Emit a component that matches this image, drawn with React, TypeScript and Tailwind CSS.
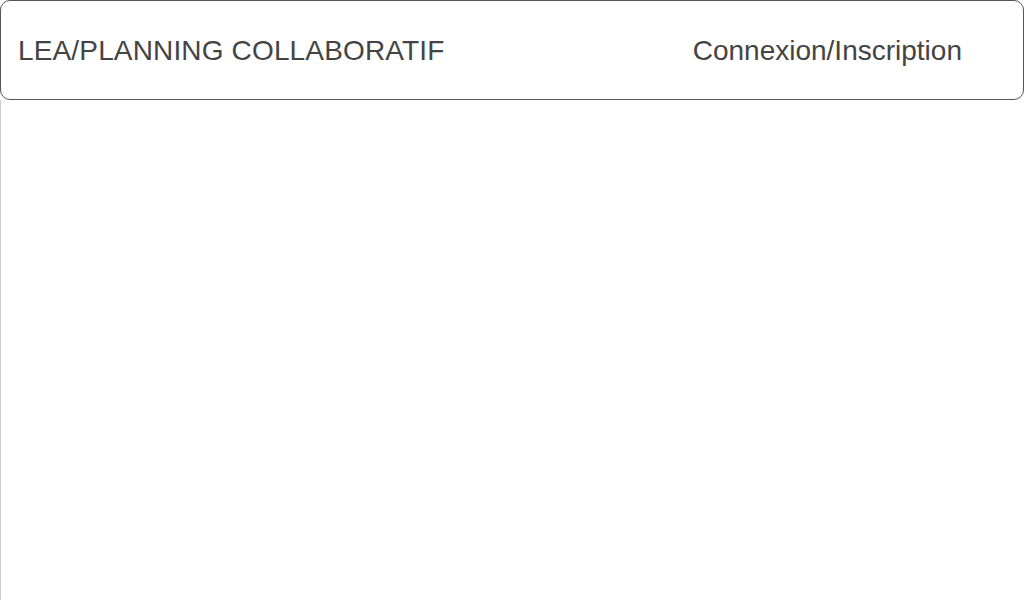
export default function App() {
  return (
    <div className="w-[1024px] h-[600px] bg-white flex flex-col font-['Liberation_Sans',Arial,sans-serif] text-[#444444]">
      {/* Top bar */}
      <header className="h-[100px] shrink-0 flex items-center justify-between border border-[#555555] rounded-[10px] pl-[17px] pr-[61px] pt-[2px]">
        <h1 className="text-[28px] leading-none font-normal tracking-[0.15px]">LEA/PLANNING COLLABORATIF</h1>
        <a className="text-[28px] leading-none">Connexion/Inscription</a>
      </header>
      <main className="flex-1 border-l border-[#cccccc]" />
    </div>
  );
}
